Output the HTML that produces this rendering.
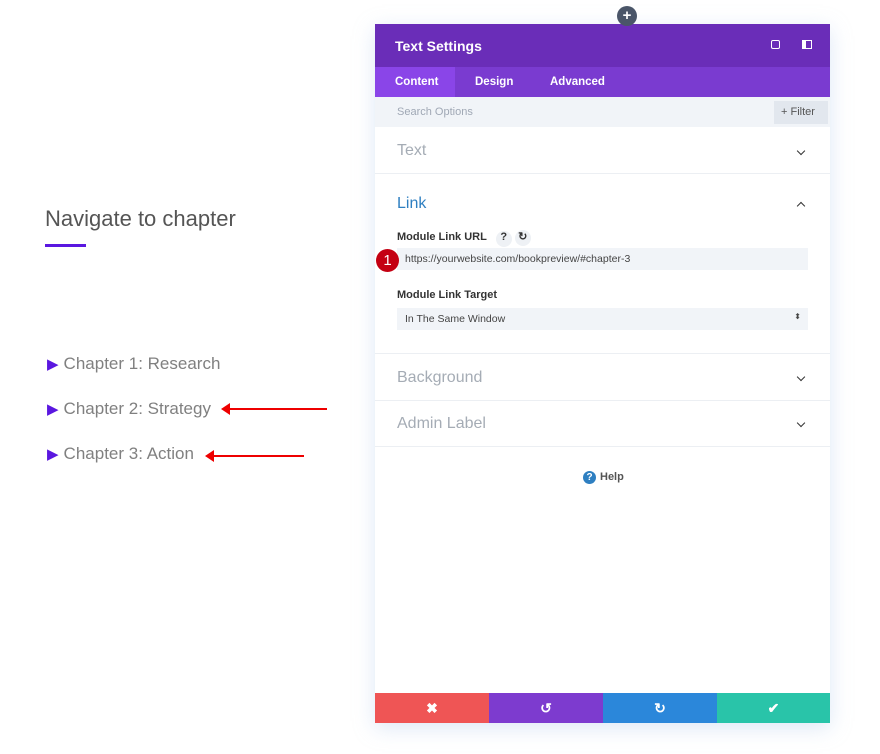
<!DOCTYPE html>
<html><head><meta charset="utf-8"><style>
*{margin:0;padding:0;box-sizing:border-box}
body{width:880px;height:754px;background:#fff;font-family:"Liberation Sans",sans-serif;position:relative;overflow:hidden}
.abs{position:absolute}
.h{left:45px;top:206px;font-size:22px;color:#555;font-weight:300}
.ul{left:45px;top:244px;width:41px;height:3px;background:#5a17e0}
.ch{left:47px;font-size:17px;color:#808080}
.ch b{color:#5a17e0;font-weight:normal;font-size:15px;margin-right:5px}
.arrow{height:2px;background:#e00}
.panel{left:375px;top:24px;width:455px;height:699px;background:#fff;box-shadow:0 5px 20px rgba(160,190,230,.35)}
.hdr{left:0;top:0;width:455px;height:43px;background:#6a2db8;color:#fff;font-weight:bold;font-size:14px;padding:14px 20px}
.tabs{left:0;top:43px;width:455px;height:30px;background:#7a3bd0;color:#fff;font-weight:bold;font-size:11.5px}
.tabs span{position:absolute;top:9px}
.srch{left:0;top:73px;width:455px;height:30px;background:#f1f4f8;color:#a0a8b5;font-size:11px;padding:9px 22px}
.sec{left:0;width:455px;border-bottom:1px solid #eceff3}
.sec .t{position:absolute;left:22px;font-size:16px;color:#a5acb5}
.chev{position:absolute;right:26px;width:6px;height:6px;border-right:1.6px solid #333;border-bottom:1.6px solid #333;transform:rotate(45deg)}
.lbl{position:absolute;left:22px;font-size:11px;font-weight:bold;color:#333}
.inp{position:absolute;left:22px;width:411px;height:22px;background:#f1f4f8;font-size:10.5px;color:#444;padding:5px 8px}
.foot{left:0;top:669px;width:455px;height:30px}
.foot div{position:absolute;top:0;height:30px;width:114px;color:#fff;font-weight:bold;text-align:center;line-height:30px;font-size:14px}
</style></head><body>
<div class="abs h">Navigate to chapter</div>
<div class="abs ul"></div>
<div class="abs ch" style="top:354px"><b>▶</b>Chapter 1: Research</div>
<div class="abs ch" style="top:399px"><b>▶</b>Chapter 2: Strategy</div>
<div class="abs ch" style="top:444px"><b>▶</b>Chapter 3: Action</div>
<div class="abs arrow" style="left:226px;top:408px;width:101px"></div>
<div class="abs" style="left:221px;top:403px;width:0;height:0;border-top:6px solid transparent;border-bottom:6px solid transparent;border-right:9px solid #e00"></div>
<div class="abs arrow" style="left:210px;top:455px;width:94px"></div>
<div class="abs" style="left:205px;top:450px;width:0;height:0;border-top:6px solid transparent;border-bottom:6px solid transparent;border-right:9px solid #e00"></div>

<div class="abs panel">
<div class="abs hdr">Text Settings
<span style="position:absolute;left:396px;top:16px;width:9px;height:9px;border:1.5px solid #fff;border-radius:2px"></span>
<span style="position:absolute;left:427px;top:16px;width:10px;height:9px;border:1.5px solid #fff;border-left-width:4px"></span>
</div>
<div class="abs tabs"><div style="position:absolute;left:0;top:0;width:80px;height:30px;background:#8a45e8"></div>
<span style="left:20px">Content</span><span style="left:100px">Design</span><span style="left:175px">Advanced</span></div>
<div class="abs srch">Search Options
<div style="position:absolute;left:399px;top:4px;width:54px;height:23px;background:#e2e7ee;color:#555;font-size:11px;padding:5px 7px">+ Filter</div></div>
<div class="abs sec" style="top:103px;height:47px"><span class="t" style="top:15px">Text</span><span class="chev" style="top:21px"></span></div>
<div class="abs sec" style="top:150px;height:180px">
<span class="t" style="top:21px;color:#2e7fc1">Link</span>
<span class="chev" style="top:29px;transform:rotate(-135deg)"></span>
<span class="lbl" style="top:56px">Module Link URL <span style="display:inline-block;width:16px;height:16px;border-radius:50%;background:#eef1f5;text-align:center;margin-left:6px">?</span> <span style="display:inline-block;width:16px;height:16px;border-radius:50%;background:#eef1f5;text-align:center">↻</span></span>
<div class="inp" style="top:74px">https://yourwebsite.com/bookpreview/#chapter-3</div>
<div style="position:absolute;left:1px;top:75px;width:23px;height:23px;border-radius:50%;background:#c40012;color:#fff;font-size:15px;text-align:center;line-height:23px">1</div>
<span class="lbl" style="top:115px">Module Link Target</span>
<div class="inp" style="top:134px">In The Same Window<span style="position:absolute;right:7px;top:4px;font-size:8px">⬍</span></div>
</div>
<div class="abs sec" style="top:330px;height:47px"><span class="t" style="top:15px">Background</span><span class="chev" style="top:20px"></span></div>
<div class="abs sec" style="top:377px;height:46px"><span class="t" style="top:14px">Admin Label</span><span class="chev" style="top:19px"></span></div>
<div class="abs" style="left:208px;top:447px;font-size:11px;font-weight:bold;color:#555"><span style="display:inline-block;width:13px;height:13px;border-radius:50%;background:#2e7fc1;color:#fff;text-align:center;font-size:10px;line-height:13px;margin-right:4px">?</span>Help</div>
<div class="abs foot">
<div style="left:0;background:#ef5555">✖</div>
<div style="left:114px;background:#7d3bcf">↺</div>
<div style="left:228px;background:#2b87da">↻</div>
<div style="left:342px;width:113px;background:#29c4a9">✔</div>
</div>
</div>
<div class="abs" style="left:617px;top:6px;width:20px;height:20px;border-radius:50%;background:#4a5568;color:#fff;text-align:center;line-height:19px;font-size:15px;font-weight:bold">+</div>
</body></html>
